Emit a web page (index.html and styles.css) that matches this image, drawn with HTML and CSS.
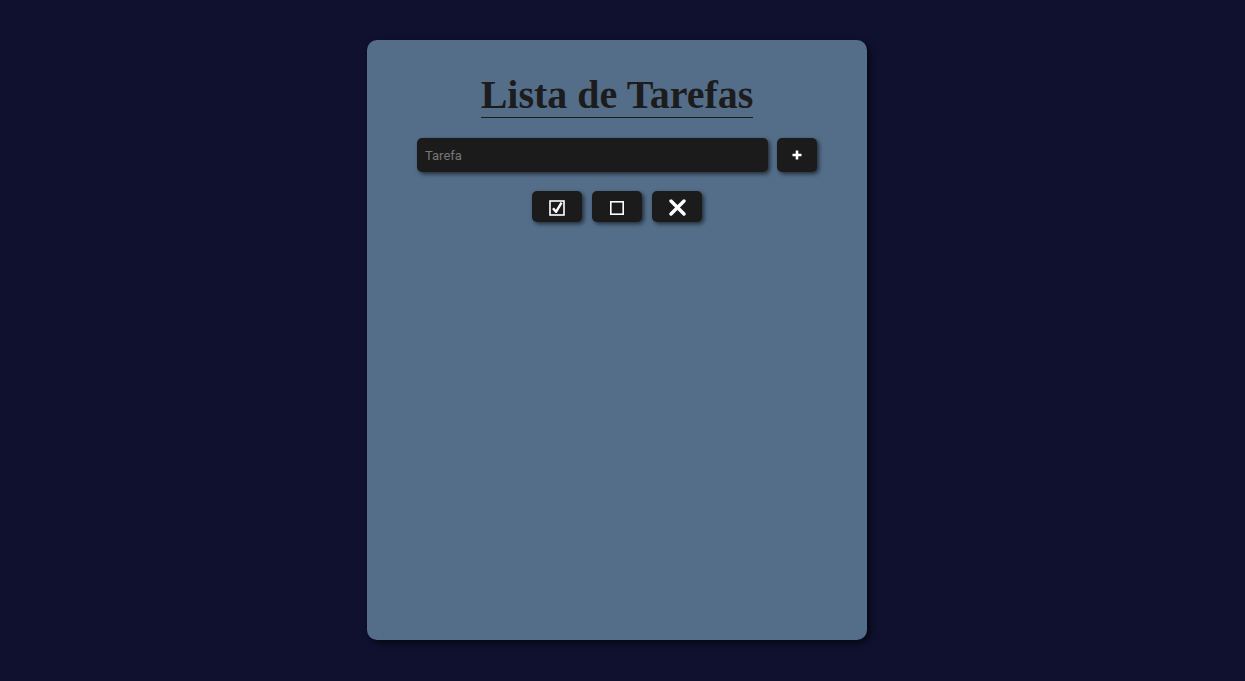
FILE: index.html
```html
<!DOCTYPE html>
<html lang="pt">
<head>
<meta charset="utf-8">
<title>Lista de Tarefas</title>
<link rel="stylesheet" href="styles.css">
</head>
<body>
<main class="card">
  <h1 class="title">Lista de Tarefas</h1>
  <div class="add-row">
    <input class="task-input" type="text" placeholder="Tarefa">
    <button class="btn btn-add" aria-label="Adicionar">
      <svg class="icon" width="10" height="10" viewBox="0 0 10 10"><path d="M5 0.5V9.5M0.5 5H9.5" stroke="#fff" stroke-width="2.6" fill="none"/></svg>
    </button>
  </div>
  <div class="actions">
    <button class="btn btn-action" aria-label="Marcar todas">
      <svg class="icon" width="16" height="16" viewBox="0 0 16 16"><rect x="1" y="1" width="14" height="14" stroke="#fff" stroke-width="1.6" fill="none"/><path d="M4 8.2L7 11.8L12.6 2.6" stroke="#fff" stroke-width="2.4" fill="none" stroke-linejoin="round"/></svg>
    </button>
    <button class="btn btn-action" aria-label="Desmarcar todas">
      <svg class="icon" width="14" height="14" viewBox="0 0 14 14"><rect x="0.8" y="0.8" width="12.4" height="12.4" stroke="#fff" stroke-width="1.6" fill="none"/></svg>
    </button>
    <button class="btn btn-action" aria-label="Remover">
      <svg class="icon" width="17" height="17" viewBox="0 0 17 17"><path d="M2 2L15 15M15 2L2 15" stroke="#fff" stroke-width="3.4" fill="none" stroke-linecap="round"/></svg>
    </button>
  </div>
</main>
</body>
</html>
```
FILE: styles.css
```css
html, body {
  margin: 0;
  padding: 0;
}
body {
  background: #0f112e;
  min-height: 681px;
  display: flex;
  justify-content: center;
  align-items: flex-start;
  padding-right: 11px;
  font-family: Roboto, "Liberation Sans", sans-serif;
}
.card {
  margin-top: 40px;
  width: 500px;
  height: 600px;
  box-sizing: border-box;
  background: #546e8a;
  border-radius: 10px;
  box-shadow: 3px 3px 6px rgba(0, 0, 0, 0.6);
  display: flex;
  flex-direction: column;
  align-items: center;
  padding: 33px 50px 0;
}
.title {
  display: inline-block;
  margin: 0;
  font-family: "Liberation Serif", "Times New Roman", serif;
  font-weight: bold;
  font-size: 40px;
  line-height: 44px;
  color: #1c1c1c;
  border-bottom: 1px solid #1c1c1c;
  padding-bottom: 0;
}
.add-row {
  margin-top: 20px;
  display: flex;
  gap: 9px;
  width: 400px;
}
.task-input {
  flex: 1;
  height: 34px;
  box-sizing: border-box;
  border: none;
  outline: none;
  border-radius: 5px;
  background: #1b1b1b;
  color: #ddd;
  font-family: Roboto, "Liberation Sans", sans-serif;
  font-size: 13px;
  padding: 0 8px;
  box-shadow: 2px 2px 4px rgba(0, 0, 0, 0.6);
}
.task-input::placeholder {
  color: #777;
}
.btn {
  border: none;
  border-radius: 5px;
  background: #1b1b1b;
  color: #fff;
  box-shadow: 2px 2px 4px rgba(0, 0, 0, 0.6);
  padding: 0;
  cursor: pointer;
  display: flex;
  align-items: center;
  justify-content: center;
}
.icon {
  display: block;
}
.btn-add {
  width: 40px;
  height: 34px;
}
.actions {
  margin-top: 19px;
  display: flex;
  gap: 10px;
}
.btn-action {
  width: 50px;
  height: 31px;
  padding-top: 2px;
}
```
